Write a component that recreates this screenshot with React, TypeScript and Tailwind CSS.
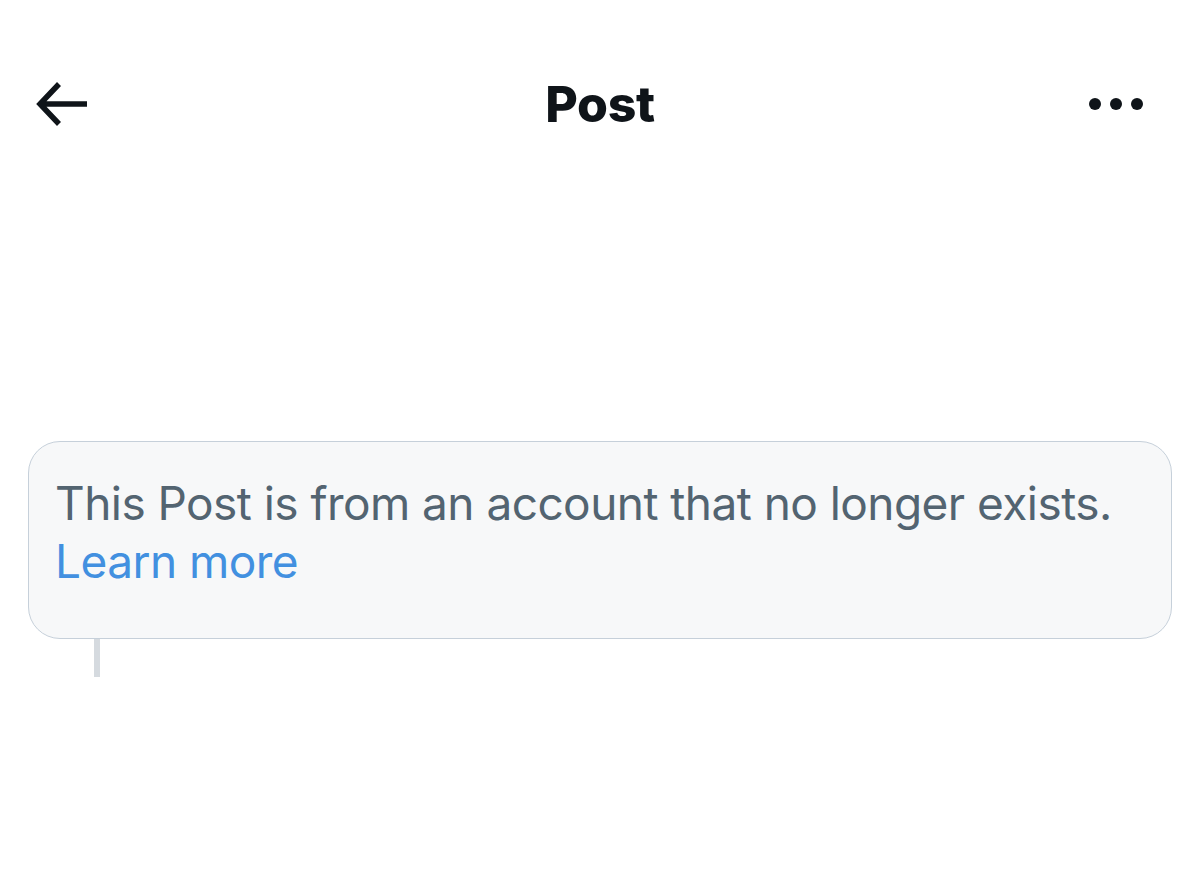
export default function App() {
  return (
    <div className="w-[1200px] h-[876px] bg-white overflow-hidden" style={{ fontFamily: "Inter, 'Liberation Sans', sans-serif" }}>
      {/* ── Header ── */}
      <div className="grid grid-cols-[1fr_auto_1fr] items-center h-[68px] mt-[70px] pl-[35px] pr-[57px]">
        <div className="flex items-center">
          <svg width="52" height="46" viewBox="0 0 52 46" fill="none" stroke="#0f1419" strokeWidth="5.5">
            <path d="M52 23H5M24 3L5 23l19 20" />
          </svg>
        </div>
        <h1 className="text-[50px] leading-[68px] font-extrabold text-[#0f1419] tracking-[-0.3px] translate-x-[11px]">Post</h1>
        <div className="flex items-center justify-end gap-[9px]">
          <span className="w-[12px] h-[12px] rounded-full bg-[#0f1419]" />
          <span className="w-[12px] h-[12px] rounded-full bg-[#0f1419]" />
          <span className="w-[12px] h-[12px] rounded-full bg-[#0f1419]" />
        </div>
      </div>

      {/* ── Unavailable notice ── */}
      <div className="mt-[303px] mx-[28px]">
        <div className="rounded-[32px] border border-[#c6d0da] bg-[#f7f8f9] px-[26px] pt-[32px] pb-[48px]">
          <p className="text-[46px] leading-[58px] text-[#536471] tracking-[-0.55px]">
            This Post is from an account that no longer exists.
            <br />
            <span className="text-[#4290e0]">Learn more</span>
          </p>
        </div>
        <div className="ml-[66px] w-[6px] h-[38px] bg-[#d5dadf]" />
      </div>
    </div>
  );
}
